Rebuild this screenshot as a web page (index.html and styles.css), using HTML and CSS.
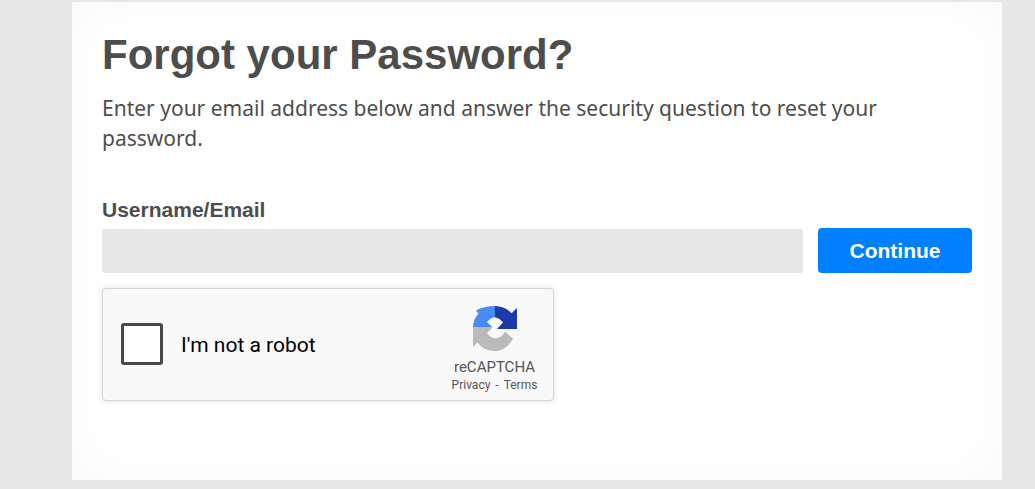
FILE: index.html
```html
<!DOCTYPE html>
<html lang="en">
<head>
<meta charset="utf-8">
<title>Forgot your Password?</title>
<link rel="stylesheet" href="styles.css">
</head>
<body>
<main class="card">
  <h1 class="title">Forgot your Password?</h1>
  <p class="intro">Enter your email address below and answer the security question to reset your password.</p>
  <form class="form">
    <label class="label" for="user">Username/Email</label>
    <div class="row">
      <input class="input" id="user" type="text">
      <button class="button" type="button">Continue</button>
    </div>
    <div class="captcha">
      <span class="check"></span>
      <span class="robot">I'm not a robot</span>
      <div class="brand">
        <svg class="logo" width="46" height="47" viewBox="0 0 46 47" aria-hidden="true">
          <path fill="#1c3aa9" d="M23 1C29.500 1 35.500 3.800 39.500 8.200L45 3V24H25L31 17.500C29 15 26.200 12.600 23 12.200Z"/>
          <path fill="#4a8af4" d="M23 1V12.200C20 12.600 17 14.500 15 16.800L20.500 22.500H1C1 17 2.800 12.500 6.500 8.700L4 5.500C9 2.500 16 1 23 1Z"/>
          <path fill="#bababa" d="M1 22.500H20.500L15 28C17 31 19.800 33.300 23 33.300C27.500 33.300 31 30.800 33 26.500L41 33.700C37 41 30.500 46 23 46C15.500 46 9.500 42.500 5.500 37.500L1 42Z"/>
        </svg>
        <span class="name">reCAPTCHA</span>
        <span class="links">Privacy<span class="dash">-</span>Terms</span>
      </div>
    </div>
  </form>
</main>
</body>
</html>
```

FILE: styles.css
```css
html, body { margin: 0; height: 100%; }
body {
  background: #e7e7e7;
  padding-top: 2px;
  box-sizing: border-box;
  overflow: hidden;
  color: #4d4d4d;
}
.card {
  box-sizing: border-box;
  width: 930px;
  height: 478px;
  margin-left: 72px;
  padding: 28px 30px 0;
  background: #fff;
  box-shadow: inset 0 0 60px rgba(0, 0, 0, 0.025);
}
.title {
  margin: 0;
  font: 700 42px/50px "Liberation Sans", Arial, sans-serif;
}
.intro {
  margin: 13px 0 0;
  font: 400 21px/30px "Noto Sans", sans-serif;
}
.form { margin-top: 45px; }
.label {
  display: block;
  font: 700 21px/24px "Liberation Sans", Arial, sans-serif;
}
.row {
  display: flex;
  align-items: flex-start;
  gap: 15px;
  margin-top: 6px;
}
.input {
  flex: 1;
  box-sizing: border-box;
  height: 44px;
  margin-top: 1px;
  border: 0;
  border-radius: 3px;
  background: #e7e7e7;
}
.button {
  width: 154px;
  height: 45px;
  border: 0;
  border-radius: 4px;
  background: #0080ff;
  color: #fff;
  font: 700 21px "Liberation Sans", Arial, sans-serif;
}
.captcha {
  box-sizing: border-box;
  display: flex;
  align-items: center;
  width: 452px;
  height: 113px;
  margin-top: 15px;
  padding-left: 18px;
  background: #f9f9f9;
  border: 1px solid #d3d3d3;
  border-radius: 4px;
  box-shadow: 0 0 4px 1px rgba(0, 0, 0, 0.08);
}
.check {
  box-sizing: border-box;
  width: 42px;
  height: 42px;
  margin-top: -2px;
  border: 3.5px solid #484848;
  border-radius: 3px;
  background: #fff;
}
.robot {
  margin-left: 18px;
  color: #000;
  font: 400 21px Roboto, sans-serif;
}
.brand {
  display: flex;
  flex-direction: column;
  align-items: center;
  box-sizing: border-box;
  width: 108px;
  margin-left: auto;
  padding: 10px 9px 0 0;
  color: #555;
  font-family: Roboto, sans-serif;
}
.logo { display: block; }
.name { margin-top: 6px; font-size: 15px; line-height: 18px; }
.links { font-size: 12px; line-height: 18px; }
.dash { margin: 0 5px; }
```
